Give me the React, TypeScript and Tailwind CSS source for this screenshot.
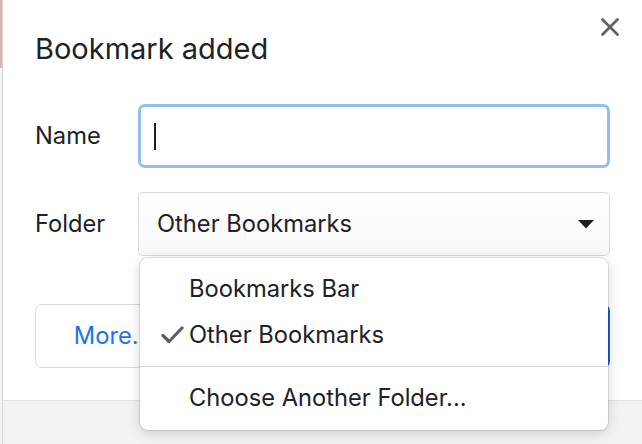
export default function App() {
  const font = { fontFamily: "Inter, 'Noto Sans', sans-serif" };

  return (
    <div
      className="relative w-[642px] h-[444px] overflow-hidden bg-white flex text-[#202124]"
      style={font}
    >
      {/* sliver of the page behind the dialog */}
      <div className="w-[3px] flex flex-col border-r border-[#d4d4d4]">
        <div className="h-[68px] bg-[#dcb6ae]" />
        <div className="flex-1 bg-[#f4f4f4]" />
      </div>

      <div className="flex-1 flex flex-col">
        <div className="flex-1 pl-[32px] pr-[32px] pt-[31px]">
          <h1 className="text-[29px] leading-[36px] font-normal">Bookmark added</h1>

          <div className="mt-[37px] flex flex-col gap-[24px]">
            <div className="flex items-center">
              <label className="w-[103px] text-[23.7px]">Name</label>
              <div className="flex-1 h-[64px] rounded-[7px] border-[3px] border-[#93bcf4] flex items-center pl-[13px]">
                <span className="w-[2px] h-[27px] bg-[#1f1f1f]" />
              </div>
            </div>
            <div className="flex items-center">
              <label className="w-[103px] text-[23.7px]">Folder</label>
              <div className="flex-1 h-[64px] rounded-[5px] border border-[#dadada] bg-gradient-to-b from-white to-[#f8f8f8] flex items-center justify-between pl-[18px] pr-[15px]">
                <span className="text-[23.7px]">Other Bookmarks</span>
                <svg width="16" height="9" viewBox="0 0 16 9">
                  <path d="M0 0 H16 L8 8.5 Z" fill="#1f1f1f" />
                </svg>
              </div>
            </div>
          </div>

          <div className="mt-[48px] flex items-center justify-between">
            <button className="h-[64px] w-[156px] rounded-[7px] border border-[#dadada] bg-white text-[23.7px] text-[#1a73e8]">
              More...
            </button>
            {/* Done button, almost fully covered by the menu */}
            <button aria-label="Done" className="h-[64px] w-[120px] rounded-[7px] bg-[#1a5fd0]" />
          </div>
        </div>

        <div className="h-[44px] bg-[#f3f3f3] border-t border-[#e3e3e3]" />
      </div>

      {/* close */}
      <button className="absolute left-[601px] top-[18px] w-[18px] h-[18px]">
        <svg width="18" height="18" viewBox="0 0 18 18">
          <path d="M1.5 1.5 L16.5 16.5 M16.5 1.5 L1.5 16.5" stroke="#5f6368" strokeWidth="2.8" strokeLinecap="round" />
        </svg>
      </button>

      {/* folder menu */}
      <div className="absolute left-[140px] top-[258px] w-[468px] h-[172px] rounded-[8px] bg-white shadow-[0_3px_14px_rgba(0,0,0,0.16)] ring-1 ring-black/10 pt-[8px] text-[23.7px]">
        <div className="h-[46px] flex items-center pl-[49px]">Bookmarks Bar</div>
        <div className="relative h-[46px] flex items-center pl-[49px]">
          <svg className="absolute left-[21px] top-[14px]" width="23" height="18" viewBox="0 0 23 18">
            <path d="M2 9.5 L8 15.5 L21 2" fill="none" stroke="#5f5f5f" strokeWidth="3.2" strokeLinecap="round" strokeLinejoin="round" />
          </svg>
          Other Bookmarks
        </div>
        <div className="my-[8px] h-px bg-[#d7d7d7]" />
        <div className="h-[46px] flex items-center pl-[49px]">Choose Another Folder...</div>
      </div>
    </div>
  );
}
